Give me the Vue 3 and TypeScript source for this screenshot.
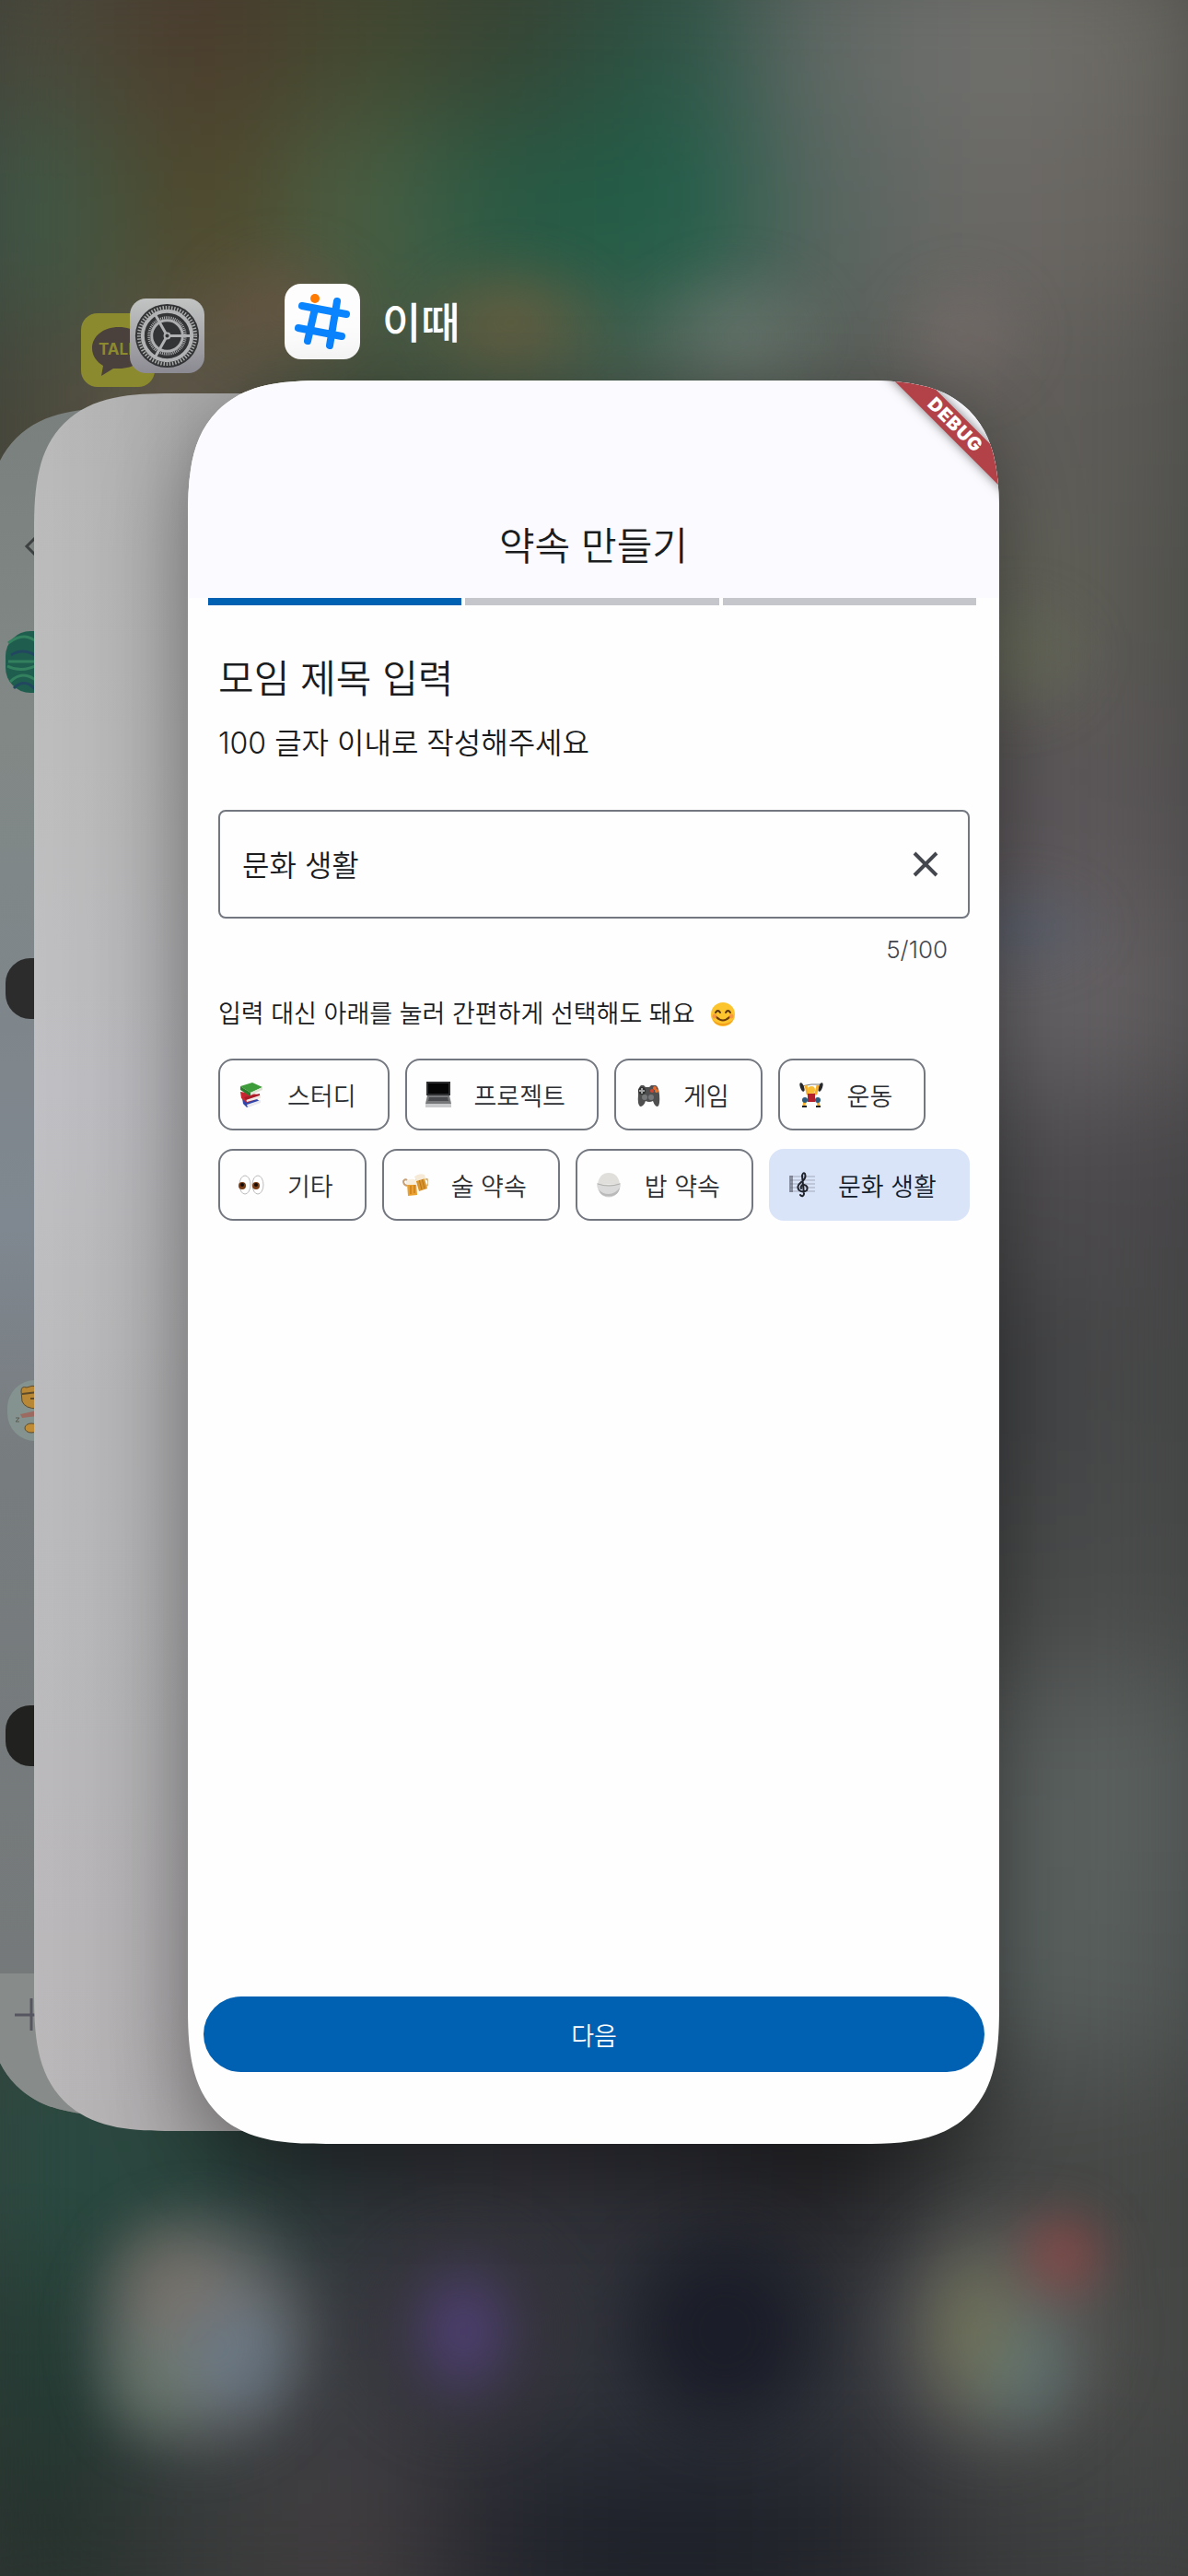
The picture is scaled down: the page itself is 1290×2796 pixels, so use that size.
<script setup lang="ts">
import { computed, ref } from 'vue'

interface Topic {
  icon: string
  label: string
}

const MAX_LENGTH = 100

const topics: Topic[] = [
  { icon: 'books', label: '스터디' },
  { icon: 'laptop', label: '프로젝트' },
  { icon: 'gamepad', label: '게임' },
  { icon: 'lifter', label: '운동' },
  { icon: 'eyes', label: '기타' },
  { icon: 'beers', label: '술 약속' },
  { icon: 'rice', label: '밥 약속' },
  { icon: 'score', label: '문화 생활' },
]

const steps = [1, 2, 3]
const currentStep = ref(1)
const title = ref('문화 생활')
const counter = computed(() => `${title.value.length}/${MAX_LENGTH}`)

// Coarse colour map of the home screen; the blur melts it into a backdrop.
const wallpaper: string[] = [
  '#4b4a3b #4c3c2d #44482f #374535 #2c5446 #646a67 #71716e #6b6962',
  '#405a47 #50482b #4a6044 #275a44 #205f49 #5a6661 #6b6966 #68645f',
  '#4b4a3c #655a4e #46523f #4a5a48 #506054 #5b5f5a #625e5b #5b5a56',
  '#4b4a3c #5d5449 #46523f #4a5a48 #566357 #5b5f5a #66675c #585752',
  '#40453f #444444 #444444 #444444 #444444 #505050 #5c575a #5a5557',
  '#40453f #444444 #444444 #444444 #444444 #505050 #68666a #625e60',
  '#40453f #444444 #444444 #444444 #444444 #444444 #4e4d50 #4b484b',
  '#40453f #444444 #444444 #444444 #444444 #444444 #404144 #484949',
  '#40453f #444444 #444444 #444444 #444444 #444444 #484949 #4a4c4b',
  '#33453f #444444 #444444 #444444 #444444 #505050 #5a605e #5b615f',
  '#2d473f #334440 #333333 #333333 #333333 #444444 #5a6260 #565c5a',
  '#2a4c42 #2a443d #2c3236 #33333a #2c2d34 #242428 #434544 #474947',
  '#213b32 #3d4547 #3a3c42 #33343c #2f333a #31343b #4c4d4c #484a48',
  '#24302b #383a3a #433e40 #23252d #1c1f28 #22242b #393a3b #414243',
]
const cells = wallpaper.flatMap((row) => row.split(' '))
</script>

<template>
  <main class="switcher">
    <svg class="defs" aria-hidden="true">
      <symbol id="smile" viewBox="0 0 28 28">
        <circle cx="14" cy="14" r="13" fill="#fcc42d" />
        <path d="M2 18a13 13 0 0 0 24 0 13 10 0 0 1-24 0" fill="#f39a1e" />
        <path d="M6 12q2.500-4 5 0M17 12q2.500-4 5 0" fill="none" stroke="#5a3510" stroke-width="2" stroke-linecap="round" />
        <path d="M7 17q7 7 14 0" fill="none" stroke="#6b3a0c" stroke-width="2" stroke-linecap="round" />
        <circle cx="5" cy="16" r="2.500" fill="#f5864a" opacity=".7" />
        <circle cx="23" cy="16" r="2.500" fill="#f5864a" opacity=".7" />
      </symbol>
      <symbol id="books" viewBox="0 0 28 28">
        <path d="M4 18l16 1 4 3-15 6-4-4z" fill="#3146a8" />
        <path d="M9 25l15-5v3L10 28z" fill="#e8e8ee" />
        <path d="M2 11l19 3 3 3-15 6-6-5z" fill="#c62631" />
        <path d="M8 18l16-4v4L9 22z" fill="#f1e9e6" />
        <path d="M6 17l17-4v2L8 20z" fill="#a81b27" />
        <path d="M2 5l13-4 11 5-13 6z" fill="#3f9c3a" />
        <path d="M2 5l11 7v4L2 9z" fill="#2c7d2b" />
        <path d="M13 12l13-6v3l-13 6z" fill="#dfe5d6" />
      </symbol>
      <symbol id="laptop" viewBox="0 0 28 28">
        <path d="M1 0h26v15H1z" fill="#2e2f31" />
        <path d="M3 2h22v11H3z" fill="#050506" />
        <path d="M2 15h24l2 9H0z" fill="#77787a" />
        <path d="M4 17h20l1 4H3z" fill="#4a4b4e" />
        <path d="M0 24h28v4H0z" fill="#c9cacc" />
      </symbol>
      <symbol id="gamepad" viewBox="0 0 28 28">
        <path d="M5 4h5l2 2h4l2-2h5q3 1 4 10 1 12-2 13-3 0-5-6-4 2-8 0-2 6-6 6-3-2-2-13 0-8 3-10z" fill="#4f4f50" />
        <circle cx="8" cy="10" r="4" fill="#2f3031" />
        <path d="M8 7v6M5 10h6" stroke="#a3a3a3" stroke-width="2" />
        <circle cx="22" cy="7" r="2" fill="#ee6a2c" />
        <circle cx="19" cy="10" r="2" fill="#ce4430" />
        <circle cx="24" cy="10" r="2" fill="#e9742b" />
        <circle cx="11" cy="17" r="3" fill="#77787a" />
        <circle cx="18" cy="17" r="3" fill="#77787a" />
      </symbol>
      <symbol id="lifter" viewBox="0 0 28 28">
        <path d="M3 5q11-3 22-2" fill="none" stroke="#777" stroke-width="1" />
        <ellipse cx="4" cy="6" rx="2" ry="5" fill="#26282b" transform="rotate(-20 4 6)" />
        <ellipse cx="24" cy="6" rx="2" ry="5" fill="#26282b" transform="rotate(20 24 6)" />
        <path d="M8 4l2 9 4 2 5-2 2-9" fill="none" stroke="#f6ae2d" stroke-width="3" />
        <circle cx="14" cy="9" r="4" fill="#f9bd35" />
        <path d="M10 13h8v9h-8z" fill="#b3202c" />
        <path d="M7 21l-1 5M21 21l1 5" stroke="#f6ae2d" stroke-width="3" />
        <circle cx="7" cy="20" r="3" fill="#2c5a7c" />
        <circle cx="21" cy="20" r="3" fill="#2c5a7c" />
        <path d="M4 27h5M19 27h5" stroke="#222" stroke-width="2" />
      </symbol>
      <symbol id="eyes" viewBox="0 0 28 28">
        <ellipse cx="7" cy="14" rx="6" ry="10" fill="#fff" stroke="#bdbdbd" />
        <ellipse cx="21" cy="14" rx="6" ry="10" fill="#fff" stroke="#bdbdbd" />
        <circle cx="4" cy="15" r="4" fill="#7a3e16" />
        <circle cx="19" cy="15" r="4" fill="#7a3e16" />
        <circle cx="4" cy="14" r="2" fill="#150b06" />
        <circle cx="19" cy="14" r="2" fill="#150b06" />
      </symbol>
      <symbol id="beers" viewBox="0 0 28 28">
        <path d="M14 7l9-3 4 14-9 3z" fill="#d9962c" />
        <path d="M18 8l3 11M21 7l3 11" stroke="#b9741d" stroke-width="1" />
        <path d="M13 5q5-4 11-2l1 4-10 3z" fill="#f6ead6" />
        <path d="M25 8q4-1 3 6l-2 1" fill="none" stroke="#d6b98a" stroke-width="2" />
        <path d="M5 13l10-1 1 13-10 1z" fill="#e9a02f" />
        <path d="M9 15v9M13 14v9" stroke="#bd6d16" stroke-width="1" />
        <path d="M4 10q5-4 11-1v5H4z" fill="#f8eedd" />
        <path d="M5 15q-4-1-4-5 2-3 4-1" fill="none" stroke="#c7a077" stroke-width="2" />
      </symbol>
      <symbol id="rice" viewBox="0 0 28 28">
        <path d="M2 13Q4 1 14 1t12 12z" fill="#e0dfdb" />
        <path d="M1 12q13 3 26 0 0 9-7 14-6 3-12 0-7-5-7-14z" fill="#d9dad9" />
        <path d="M2 13q12 4 24 0" fill="none" stroke="#b0afab" />
        <path d="M7 25q7 3 14 0 4-2 5-8-5 7-12 7T3 19q1 4 4 6z" fill="#b9bab9" />
      </symbol>
      <symbol id="score" viewBox="0 0 28 28">
        <path d="M1 5h27M1 9h27M1 13h27M1 17h27M1 21h27" stroke="#a3aabb" stroke-width="1" />
        <path d="M1 4v18M3 4v18" stroke="#3c414b" stroke-width="1" />
        <path d="M12 25q3 3 4-1l-2-20q1-4 3-2 2 5-4 9-6 5-2 9 4 3 8 0 2-5-3-6-4 0-3 4" fill="none" stroke="#20232b" stroke-width="2" stroke-linecap="round" />
      </symbol>
    </svg>

    <div class="wallpaper" aria-hidden="true">
      <i v-for="(color, index) in cells" :key="index" :style="{ background: color }" />
    </div>
    <div class="glow" aria-hidden="true" />

    <article class="back-card chat-card" aria-label="카카오톡">
      <svg class="chat-preview" viewBox="0 0 240 1853" aria-hidden="true">
        <path d="M0 1699h240v154H0z" fill="#878b89" />
        <path d="M54 140l-10 10 10 10" fill="none" stroke="#3d4141" stroke-width="3" />
        <rect x="21" y="242" width="70" height="67" rx="27" fill="#1f5e4e" />
        <path d="M24 255q18-14 32 0M24 275h32M23 280q16 8 34-2M26 297q14-14 30 0" fill="none" stroke="#33805f" stroke-width="3" />
        <path d="M27 268q12-8 26 0M30 304q12-12 24 2" fill="none" stroke="#22485f" stroke-width="3" />
        <rect x="21" y="597" width="70" height="66" rx="27" fill="#2c2c2c" />
        <rect x="23" y="1055" width="70" height="66" rx="30" fill="#84938f" />
        <path d="M38 1067q0-6 6-4 6-3 12-1v24q-14 0-17-8z" fill="#b98836" stroke="#5c4a2a" />
        <path d="M39 1070l17-2M48 1075h5" stroke="#5c4a2a" stroke-width="2" />
        <path d="M37 1092l18-4v6l-16 2z" fill="#9c6a60" />
        <ellipse cx="49" cy="1107" rx="7" ry="5" fill="#c08d36" stroke="#5c4a2a" />
        <path d="M32 1096h4l-4 4h4" fill="none" stroke="#5c5a52" />
        <rect x="21" y="1408" width="70" height="66" rx="27" fill="#21211f" />
        <path d="M31 1744h29M49 1726v35" stroke="#565661" stroke-width="3" />
      </svg>
    </article>
    <article class="back-card settings-card" aria-label="설정" />

    <svg class="back-icon talk-icon" viewBox="0 0 80 80" role="img" aria-label="카카오톡">
      <rect width="80" height="80" rx="18" fill="#8c8a2f" />
      <path d="M41 15c-17 0-29 10-29 23 0 8 5 15 12 19l-2 11 13-8h6c17 0 29-9 29-22S58 15 41 15z" fill="#4b413c" />
      <text x="19" y="45" class="talk-text">TALK</text>
    </svg>
    <svg class="back-icon settings-icon" viewBox="0 0 82 82" role="img" aria-label="설정">
      <defs>
        <linearGradient id="steel" x1="0" y1="0" x2="0" y2="1">
          <stop offset="0" stop-color="#c2c4c3" />
          <stop offset="1" stop-color="#8d8c94" />
        </linearGradient>
      </defs>
      <rect width="82" height="82" rx="18" fill="url(#steel)" />
      <circle cx="41" cy="41" r="35" fill="#333435" />
      <circle cx="41" cy="41" r="31" fill="none" stroke="#aaacac" stroke-width="4" stroke-dasharray="1.500 1.700" />
      <circle cx="41" cy="41" r="27" fill="none" stroke="#b2b3b4" stroke-width="4" />
      <circle cx="41" cy="41" r="20" fill="none" stroke="#adaeaf" stroke-width="3" stroke-dasharray="1 1" />
      <circle cx="41" cy="41" r="17" fill="none" stroke="#adaeaf" stroke-width="3" />
      <path d="M41 41h26M41 41L28 18M41 41L28 64" stroke="#b0b1b2" stroke-width="3" />
      <circle cx="41" cy="41" r="4" fill="#b0b1b2" />
      <circle cx="41" cy="41" r="2" fill="#333435" />
    </svg>

    <header class="app-label">
      <svg class="app-icon" viewBox="0 0 82 82" aria-hidden="true">
        <rect width="82" height="82" rx="18" fill="#fdfdfd" />
        <g stroke="#0a84ff" stroke-width="8" stroke-linecap="round">
          <path d="M19 24l48 9M15 48l47 9M57 19l-8 48M33 27l-8 35" />
        </g>
        <circle cx="33" cy="16" r="5" fill="#ff7a00" />
      </svg>
      <span>이때</span>
    </header>

    <section class="app-card">
      <div class="ribbon">DEBUG</div>
      <header class="app-header">
        <h1>약속 만들기</h1>
      </header>
      <div class="steps" role="progressbar" aria-valuemin="1" aria-valuemax="3" :aria-valuenow="currentStep" aria-label="진행 단계">
        <span v-for="step in steps" :key="step" :class="{ done: step <= currentStep }" />
      </div>

      <form class="form" @submit.prevent="currentStep = Math.min(currentStep + 1, steps.length)">
        <label for="meeting-title">모임 제목 입력</label>
        <p class="hint">100 글자 이내로 작성해주세요</p>
        <div class="field">
          <input id="meeting-title" v-model="title" type="text" :maxlength="MAX_LENGTH" />
          <button type="button" class="clear" aria-label="지우기" @click="title = ''">
            <svg viewBox="0 0 28 28" aria-hidden="true">
              <path d="M2 2l24 24M26 2L2 26" stroke="#44474e" stroke-width="4" />
            </svg>
          </button>
        </div>
        <p class="counter">{{ counter }}</p>
        <p class="helper">
          <span>입력 대신 아래를 눌러 간편하게 선택해도 돼요</span>
          <svg role="img" aria-label="웃는 얼굴"><use href="#smile" /></svg>
        </p>
        <div class="chips">
          <button
            v-for="topic in topics"
            :key="topic.label"
            type="button"
            class="chip"
            :class="{ selected: topic.label === title }"
            :aria-pressed="topic.label === title"
            @click="title = topic.label"
          >
            <svg aria-hidden="true"><use :href="`#${topic.icon}`" /></svg>
            <span>{{ topic.label }}</span>
          </button>
        </div>
        <button type="submit" class="next">다음</button>
      </form>
    </section>
  </main>
</template>

<style>
body {
  margin: 0;
  background: #3a3c3b;
}
</style>

<style scoped>
.switcher {
  position: relative;
  display: grid;
  grid-template-columns: 204fr 881fr 205fr;
  align-content: start;
  row-gap: 23px;
  min-height: 100vh;
  box-sizing: border-box;
  padding: 308px 0 80px;
  overflow: hidden;
  font-family: Inter, 'Noto Sans CJK KR', sans-serif;
  font-weight: 350;
  color: #1a1c1e;
}

.defs {
  position: absolute;
  width: 0;
  height: 0;
}

.wallpaper {
  position: absolute;
  inset: 0;
  display: grid;
  grid-template-columns: repeat(8, 1fr);
  grid-auto-rows: 1fr;
  filter: blur(64px);
  transform: scale(1.06);
}

.glow {
  position: absolute;
  inset: 0;
  filter: blur(20px);
  background:
    radial-gradient(110px 80px at 24% 12%, #78554680, transparent),
    radial-gradient(120px 80px at 43% 12.500%, #80603b99, transparent),
    radial-gradient(120px 90px at 62% 13%, #7d857f80, transparent),
    radial-gradient(90px 80px at 81% 13%, #80727080, transparent),
    radial-gradient(90px 80px at 86% 25.500%, #6c715a8c, transparent),
    radial-gradient(100px 60px at 86% 36%, #52607880, transparent),
    radial-gradient(65px 65px at 89.500% 87.500%, #9d4444a6 10%, transparent),
    radial-gradient(90px 90px at 14% 88.500%, #8d7a6a66, transparent),
    radial-gradient(80px 90px at 20% 91.500%, #66809a8c, transparent),
    radial-gradient(80px 90px at 13% 92.500%, #6e857280, transparent),
    radial-gradient(145px 155px at 17% 90.500%, #7c7c7ccc 35%, transparent),
    radial-gradient(75px 95px at 39% 90.500%, #5b4690b3, transparent),
    radial-gradient(140px 140px at 39% 90.500%, #36333ce6 20%, transparent),
    radial-gradient(140px 145px at 61% 90.500%, #1b1d28 35%, transparent),
    radial-gradient(75px 115px at 82% 90.500%, #7d805180, transparent),
    radial-gradient(80px 90px at 86% 92%, #60808099, transparent),
    radial-gradient(150px 160px at 84% 90.500%, #6a6a66b3 25%, transparent);
}

.back-card {
  position: absolute;
  border-radius: 112px;
  overflow: hidden;
}

.chat-card {
  top: 443px;
  left: -15px;
  width: 66%;
  height: 1853px;
  background: linear-gradient(180deg, #7a807d 0%, #818885 18%, #7f868b 36%, #7f8790 48%, #777c7e 62%, #747879 100%);
}

.chat-preview {
  display: block;
  width: 240px;
  height: 1853px;
}

.settings-card {
  top: 427px;
  left: 37px;
  width: 67%;
  height: 1886px;
  background:
    linear-gradient(90deg, transparent, rgb(0 0 0 / 8%) 170px),
    linear-gradient(180deg, #bababa 0%, #bebebe 20%, #c1c1c5 40%, #bcbcbe 58%, #bbb8ba 100%);
}

.back-icon {
  position: absolute;
}

.talk-icon {
  top: 340px;
  left: 88px;
  width: 80px;
  height: 80px;
}

.talk-text {
  font: 700 17px Inter, sans-serif;
  fill: #8c8a2f;
}

.settings-icon {
  top: 324px;
  left: 141px;
  width: 81px;
  height: 81px;
}

.app-label {
  position: relative;
  grid-column: 2;
  display: flex;
  align-items: center;
  gap: 24px;
  height: 82px;
  padding-left: 105px;
  font-size: 46px;
  font-weight: 500;
  color: #fff;
}

.app-label span {
  margin-top: -4px;
}

.app-icon {
  width: 82px;
  height: 82px;
}

.app-card {
  position: relative;
  grid-column: 2;
  display: flex;
  flex-direction: column;
  box-sizing: border-box;
  aspect-ratio: 881 / 1914;
  border-radius: 116px;
  overflow: hidden;
  background: #fefefe;
  box-shadow: 0 30px 90px rgb(0 0 0 / 40%);
}

/* Continuous-curvature corners where the engine can draw them. */
@supports (corner-shape: squircle) {
  .back-card,
  .app-card {
    border-radius: 150px;
    corner-shape: superellipse(1.5);
  }
}

.ribbon {
  position: absolute;
  top: 36px;
  right: -52px;
  width: 200px;
  height: 25px;
  background: #b24247;
  box-shadow: 0 0 12px rgb(0 0 0 / 50%);
  color: #fff;
  font-size: 20px;
  font-weight: 900;
  line-height: 25px;
  letter-spacing: 1px;
  text-align: center;
  transform: rotate(45deg);
}

.app-header {
  padding: 150px 32px 26px;
  background: #fafaff;
  text-align: center;
}

h1 {
  margin: 0;
  font-size: 42px;
  font-weight: 350;
  line-height: 60px;
}

.steps {
  display: flex;
  gap: 4px;
  padding: 0 25px 0 22px;
}

.steps span {
  flex: 1;
  height: 8px;
  background: #c4c6cc;
}

.steps .done {
  background: #0061b2;
}

.form {
  flex: 1;
  display: flex;
  flex-direction: column;
  padding: 50px 32px 78px 33px;
}

.form label {
  font-size: 42px;
  line-height: 60px;
}

.form p {
  margin: 0;
}

.form .hint {
  margin: 16px 0 48px;
  font-size: 32px;
  line-height: 48px;
}

.field {
  display: flex;
  align-items: center;
  gap: 16px;
  height: 118px;
  box-sizing: border-box;
  padding: 0 32px 0 24px;
  border: 2px solid #73777f;
  border-radius: 8px;
}

.field input {
  flex: 1;
  min-width: 0;
  padding: 4px 0 0;
  border: 0;
  outline: 0;
  background: none;
  color: inherit;
  font: inherit;
  font-size: 32px;
  line-height: 48px;
}

.clear {
  padding: 0;
  border: 0;
  background: none;
}

.clear svg {
  display: block;
  width: 28px;
  height: 28px;
}

.form .counter {
  margin: 16px 24px 32px;
  color: #44474e;
  font-size: 26px;
  line-height: 36px;
  text-align: right;
}

.helper {
  display: flex;
  align-items: center;
  gap: 16px;
  font-size: 27px;
  line-height: 40px;
}

.helper svg {
  width: 28px;
  height: 28px;
}

.chips {
  display: flex;
  flex-wrap: wrap;
  gap: 20px 17px;
  margin: 28px -8px 0 0;
}

.chip {
  display: flex;
  align-items: center;
  gap: 25px;
  height: 78px;
  box-sizing: border-box;
  padding: 0 34px 0 20px;
  border: 2px solid #73777f;
  border-radius: 16px;
  background: #fefefe;
  color: #2c2f33;
  font: inherit;
  font-size: 27px;
}

.chip svg {
  width: 28px;
  height: 28px;
}

.selected {
  border-color: #dae4f9;
  background: #dae4f9;
  color: #131c2b;
}

.next {
  height: 82px;
  margin: auto -16px 0;
  border: 0;
  border-radius: 41px;
  background: #0061b2;
  color: #fff;
  font: inherit;
  font-size: 27px;
}
</style>
